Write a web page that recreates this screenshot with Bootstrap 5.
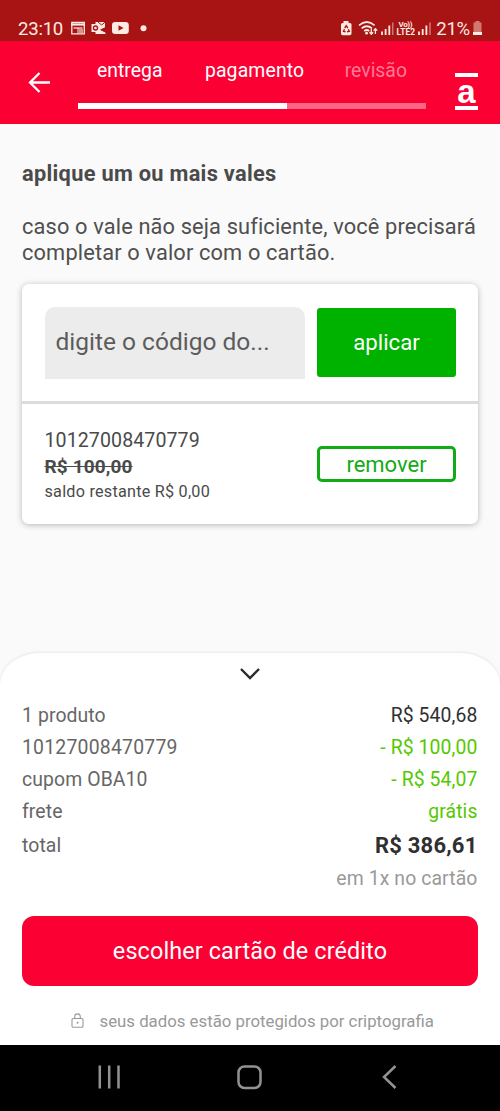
<!DOCTYPE html>
<html lang="pt-BR">
<head>
<meta charset="utf-8">
<meta name="viewport" content="width=device-width, initial-scale=1">
<title>pagamento</title>
<link href="https://cdn.jsdelivr.net/npm/bootstrap@5.3.0/dist/css/bootstrap.min.css" rel="stylesheet">
<style>
body{font-family:Roboto,"Noto Sans",sans-serif;background:#fafafa;color:#4a4a4a;overflow:hidden}
svg{display:block;flex:none}
.app{height:1111px;width:500px}
.status{height:41px;background:#a81414;color:#fdeae2;padding:17px 18px 0 18px}
.status .txt{font-size:18.6px;line-height:24px;letter-spacing:-.25px}
.status .alerts{margin-left:7px}
.status .charge{margin:0 3px 0 2px}
.topbar{height:83px;background:#fb0033;color:#fff;padding:0 22px 0 28px}
.steps{width:348px;margin-left:28px}
.steps .labels{font-size:19.4px;line-height:26px;height:46px;padding:1px 19px 0 19px}
.steps .mid{letter-spacing:.14px;padding-left:2px}
.steps .off{color:#fd7a94}
.steps .progress{height:6px;border-radius:0;background:#fd6684}
.steps .progress-bar{width:60%;background:#fff}
.brand{width:23px;height:37px;border:solid #fff;border-width:4px 0;font:bold 33px/29px "Liberation Sans",sans-serif;margin-top:17px}
.content{padding:37px 22px 0}
.content h1{font-size:21.8px;line-height:26px;font-weight:700;letter-spacing:.28px;margin:0 0 26px}
.content p{font-size:21.8px;line-height:26px;letter-spacing:.14px;margin:0 -4px 19px 0;padding-top:.5px;height:52px;color:#4f4f4f}
.voucher{border:0;border-radius:7px;box-shadow:0 1px 6px rgba(0,0,0,.27);height:240px}
.voucher .entry{height:120px;border-bottom:3px solid #dcdcdc;padding:22.5px 22px 0 22.5px}
.field{width:260.5px;height:72.5px;border:0;border-radius:10px 10px 0 0;background:#ececec;padding:0 11px 2px;font-size:24.5px;color:#5a5a5a}
.field::placeholder{color:#5c5c5c;opacity:1}
.apply{width:139px;height:69.500px;margin-top:1px;border:0;border-radius:3px;background:#00b200;color:#fff;font-size:22.2px;padding:1px 0 0}
.applied{padding:24px 22px 0 22.5px}
.code{font-size:19.6px;line-height:26px;letter-spacing:.08px}
.worth{font-size:19px;line-height:26px;font-weight:700;letter-spacing:.12px}
.rest{font-size:16.2px;line-height:24px;letter-spacing:.24px}
.remove{width:139px;height:36px;margin-top:18px;border:3px solid #12ab16;border-radius:5px;color:#12ab16;font-size:22px;line-height:30px;padding:1px 0 0}
.sheet{height:392px;background:#fff;border-radius:40px 40px 0 0/32px 32px 0 0;box-shadow:0 -1px 3px rgba(0,0,0,.08);padding:0 22px}
.line-item{font-size:19.4px;line-height:32px;letter-spacing:.1px;color:#666;padding-right:.5px}
.line-item .sum{color:#303030}
.line-item .good{color:#56c800}
.line-item .long{letter-spacing:.22px}
.line-item.total{line-height:35px}
.line-item.total .sum{font-size:22px;font-weight:700;letter-spacing:.2px}
.line-item.note{color:#999}
.pay{height:70px;margin-top:21px;border:0;border-radius:12px;background:#fb0033;color:#fff;font-size:23.4px;letter-spacing:.12px;padding:2px 0 0}
.secure{font-size:16.8px;line-height:24px;color:#999;padding-left:49px;margin-top:23px}
.secure span{margin-left:15.5px}
.navkeys{height:66px;background:#000;padding:20px 103px 0 98px}
.home-key{margin-right:5px}
</style>
</head>
<body>
<div class="app d-flex flex-column">
  <div class="status d-flex align-items-start">
    <span class="txt">23:10</span>
    <svg class="alerts" width="80" height="22" viewBox="70 17 80 22" fill="none" stroke="#fdeae2">
      <path d="M71.800 22.500v11.300h12.500V22.500z" stroke-width="1.300"/><path d="M71 24.600h14" stroke-width="2"/><path d="M73 22v1.500m3-1.500v1.500m3-1.500v1.500m3-1.500v1.500" stroke-width="1.300"/><path d="M73.500 28h9" stroke-width="1.200"/><path d="M78 28v5.500" stroke-width="1"/><path fill="#d99389" stroke="none" d="M79 29h4v4h-4z"/>
      <path fill="#fdeae2" stroke="none" d="M95.500 22H105v5.500l-5 2.200 5.500 2.800V34h-10zM91.500 24h8.300v8h-8.300z"/><circle cx="95.500" cy="28" r="2" stroke="#a81414" stroke-width="1.300"/><path d="m98 22 3.700 3 3.500-3" stroke="#a81414"/><path d="m107 27-6 2.800 6 3" stroke="#a81414" stroke-width=".8"/>
      <rect x="112" y="22" width="16.800" height="12" rx="3.200" fill="#fdeae2" stroke="none"/><path d="m118.500 25.300 5 2.700-5 2.700z" fill="#a81414" stroke="none"/>
      <circle cx="143.500" cy="28.300" r="3" fill="#fdeae2" stroke="none"/>
    </svg>
    <svg class="ms-auto" width="95" height="22" viewBox="339 17 95 22" fill="none" stroke="#fdeae2">
      <path fill="#fdeae2" stroke="none" d="M343.500 21h5v2h1.400q1.600 0 1.600 1.600v9q0 1.600-1.600 1.600h-7.300q-1.600 0-1.600-1.600v-9q0-1.600 1.600-1.600h.9z"/><path d="m344.700 28 1.500-2.300 1.600 2.300m-3.300 1.300-1 2 2.100.6m2.700-2.700 1 2-2.400.7" stroke="#a81414" stroke-width="1.400"/>
      <path d="M359 25.300q7.800-6.600 15.600 0M361.600 28.400q5.200-4.300 10.400 0M364.200 31q2.600-2 5 0" stroke-width="1.700"/><circle cx="366.600" cy="33.200" r="1.400" fill="#fdeae2" stroke="none"/><path d="M371.300 28.700v5m-1.800-1.500 1.800 2 1.800-2m2.300 1.900v-5m-1.800 1.500 1.800-2 1.800 2" stroke-width="1.300"/>
      <path d="M382 31.500V35m3.600-6V35m3.700-9.500V35" stroke-width="1.800"/><path d="M392.700 22.500V35" stroke="#d17870" stroke-width="1.500"/>
      <path d="M419 31.500V35m3.700-6V35m3.700-9.500V35" stroke-width="1.800"/><path d="M430 22.500V35" stroke="#d17870" stroke-width="1.500"/>
      <g fill="#fdeae2" stroke="none" font-family="Roboto,sans-serif" font-weight="700"><text x="398.500" y="27" font-size="8" textLength="14">Vo))</text><text x="396.500" y="35" font-size="8.400" textLength="18.500">LTE2</text></g>
    </svg>
    <span class="txt charge">21%</span>
    <svg width="9" height="22" viewBox="473 17 9 22"><path fill="#d17870" d="M475.500 21h4v1.600h2V32h-8v-9.400h2z"/><path fill="#fdeae2" d="M473 32h9v3h-9z"/></svg>
  </div>

  <header class="topbar d-flex align-items-start">
    <svg width="22" height="22" viewBox="0 0 22 22" style="margin-top:31px" fill="none" stroke="#fff" stroke-width="2.300"><path d="M22 10.500H2M11.500 1 2 10.500l9.500 9.500"/></svg>
    <div class="steps pt-3">
      <div class="labels d-flex justify-content-between"><span>entrega</span><span class="mid">pagamento</span><span class="off">revisão</span></div>
      <div class="progress"><div class="progress-bar"></div></div>
    </div>
    <div class="brand ms-auto align-self-center d-flex justify-content-center">a</div>
  </header>

  <main class="content flex-grow-1">
    <h1>aplique um ou mais vales</h1>
    <p>caso o vale não seja suficiente, você precisará completar o valor com o cartão.</p>
    <div class="card voucher">
      <div class="entry d-flex justify-content-between align-items-start">
        <input class="field" placeholder="digite o código do...">
        <button class="btn apply">aplicar</button>
      </div>
      <div class="applied d-flex justify-content-between align-items-start">
        <div><div class="code">10127008470779</div><div class="worth"><s>R$ 100,00</s></div><div class="rest">saldo restante R$ 0,00</div></div>
        <button class="btn remove">remover</button>
      </div>
    </div>
  </main>

  <section class="sheet flex-shrink-0">
    <svg class="mx-auto" width="22" height="47" viewBox="0 0 22 47" fill="none" stroke="#2b2b2b" stroke-width="2.400"><path d="m2 16 9 9 9-9"/></svg>
    <div class="line-item d-flex justify-content-between"><span>1 produto</span><span class="sum">R$ 540,68</span></div>
    <div class="line-item d-flex justify-content-between"><span class="long">10127008470779</span><span class="good">- R$ 100,00</span></div>
    <div class="line-item d-flex justify-content-between"><span>cupom OBA10</span><span class="good">- R$ 54,07</span></div>
    <div class="line-item d-flex justify-content-between"><span>frete</span><span class="good">grátis</span></div>
    <div class="line-item total d-flex justify-content-between"><span>total</span><span class="sum">R$ 386,61</span></div>
    <div class="line-item note text-end">em 1x no cartão</div>
    <button class="btn pay w-100 d-block">escolher cartão de crédito</button>
    <div class="secure d-flex align-items-center">
      <svg width="13" height="16" viewBox="0 0 13 16" fill="none" stroke="#999" stroke-width="1.100"><rect x="1" y="5.500" width="11" height="8.700" rx="1.300"/><path d="M3.700 5.500V3.700a2.800 2.800 0 0 1 5.600 0v1.800"/><circle cx="6.500" cy="9.800" r="1" fill="#999" stroke="none"/></svg>
      <span>seus dados estão protegidos por criptografia</span>
    </div>
  </section>

  <nav class="navkeys d-flex justify-content-between align-items-start flex-shrink-0">
    <svg width="23" height="24" viewBox="0 0 23 24" stroke="#929292" stroke-width="2.500"><path d="M1.800 .5v23M11.200 .5v23M20.500 .5v23"/></svg>
    <svg class="home-key" width="25" height="25" viewBox="0 0 25 25" fill="none" stroke="#929292" stroke-width="2.500"><rect x="1.500" y="1.500" width="22" height="21.500" rx="6"/></svg>
    <svg width="15" height="24" viewBox="0 0 15 24" fill="none" stroke="#929292" stroke-width="2.500"><path d="M13.500 1 2 12l11.500 11"/></svg>
  </nav>
</div>
<script src="https://cdn.jsdelivr.net/npm/bootstrap@5.3.0/dist/js/bootstrap.bundle.min.js"></script>
</body>
</html>
